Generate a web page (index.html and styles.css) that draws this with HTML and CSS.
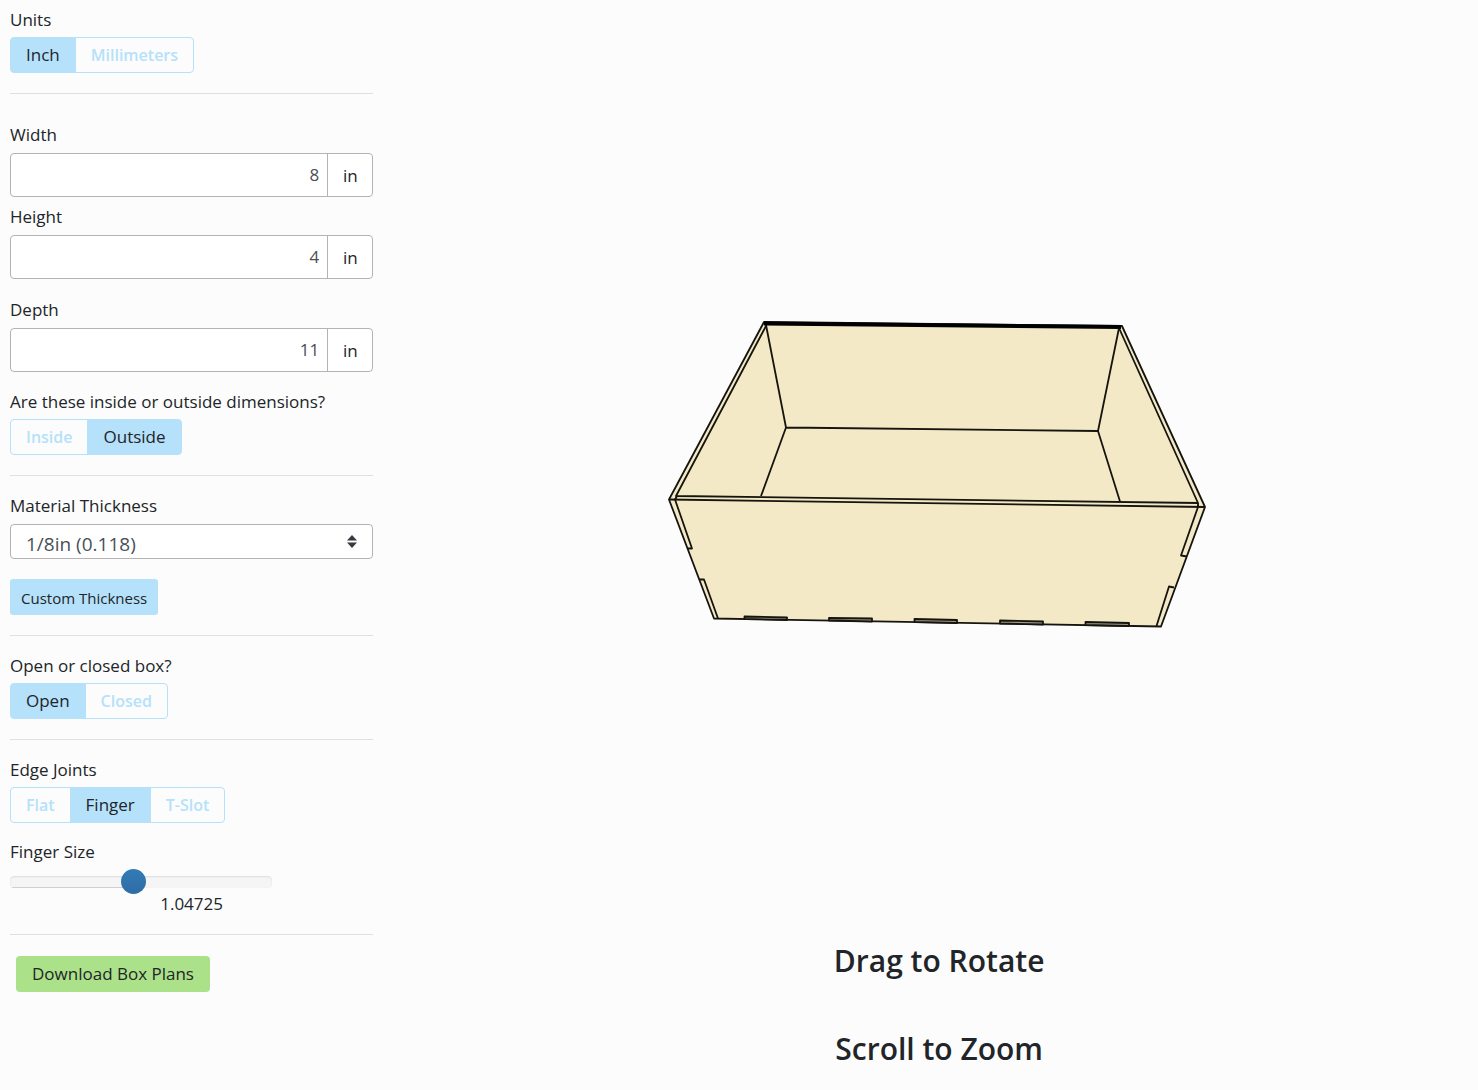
FILE: index.html
```
<!DOCTYPE html>
<html lang="en">
<head>
    <meta charset="UTF-8">
    <meta name="viewport" content="width=device-width, initial-scale=1.0">
    <title>Box Designer</title>
    <link rel="stylesheet" href="styles.css">
</head>
<body>
    <div class="page">
        <form class="sidebar">
            <div class="field" role="group" aria-labelledby="unitsLabel">
                <span class="field-label" id="unitsLabel">Units</span>
                <div class="btn-group">
                    <button type="button" class="btn-toggle active">Inch</button>
                    <button type="button" class="btn-toggle">Millimeters</button>
                </div>
            </div>

            <hr>

            <div class="dimensions">
                <label class="field-label" for="boxWidth">Width</label>
                <div class="input-group">
                    <input type="text" id="boxWidth" value="8">
                    <span class="unit">in</span>
                </div>
                <label class="field-label label-height" for="boxHeight">Height</label>
                <div class="input-group">
                    <input type="text" id="boxHeight" value="4">
                    <span class="unit">in</span>
                </div>
                <label class="field-label label-depth" for="boxDepth">Depth</label>
                <div class="input-group">
                    <input type="text" id="boxDepth" value="11">
                    <span class="unit">in</span>
                </div>
            </div>

            <div class="field field-next" role="group" aria-labelledby="sideLabel">
                <span class="field-label" id="sideLabel">Are these inside or outside dimensions?</span>
                <div class="btn-group">
                    <button type="button" class="btn-toggle">Inside</button>
                    <button type="button" class="btn-toggle active">Outside</button>
                </div>
            </div>

            <hr>

            <div class="field">
                <label class="field-label" for="thickness">Material Thickness</label>
                <div class="select-wrap">
                    <select id="thickness">
                        <option>1/8in (0.118)</option>
                        <option>1/4in (0.236)</option>
                    </select>
                    <svg class="select-arrows" viewBox="0 0 10 13" aria-hidden="true">
                        <path d="M5 0L10 5.5H0zM5 13L0 7.5H10z"/>
                    </svg>
                </div>
                <button type="button" class="btn btn-custom">Custom Thickness</button>
            </div>

            <hr>

            <div class="field" role="group" aria-labelledby="lidLabel">
                <span class="field-label" id="lidLabel">Open or closed box?</span>
                <div class="btn-group">
                    <button type="button" class="btn-toggle active">Open</button>
                    <button type="button" class="btn-toggle">Closed</button>
                </div>
            </div>

            <hr>

            <div class="field" role="group" aria-labelledby="jointLabel">
                <span class="field-label" id="jointLabel">Edge Joints</span>
                <div class="btn-group">
                    <button type="button" class="btn-toggle">Flat</button>
                    <button type="button" class="btn-toggle active">Finger</button>
                    <button type="button" class="btn-toggle">T-Slot</button>
                </div>
            </div>

            <div class="field field-next finger-size">
                <label class="field-label" for="fingerSize">Finger Size</label>
                <input type="range" id="fingerSize" min="0" max="100" value="47">
                <output for="fingerSize">1.04725</output>
            </div>

            <hr>

            <button type="button" class="btn btn-download">Download Box Plans</button>
        </form>

        <main class="preview">
            <div class="viewer">
                <svg class="box" viewBox="667 318 544 312" role="img" aria-label="Box preview">
                    <path class="wood" d="M764 322L1122 326L1205 507L1161 626.500L714 618.500L669 499.500z"/>
                    <!-- inside walls and floor -->
                    <path d="M766 325L786 427.500L1098 431L1119 328M786 427.500L761 496M1098 431L1120 501.500"/>
                    <!-- rim -->
                    <path d="M766 326L676 496L1198 503L1119 328"/>
                    <path d="M669 499.500L1205 507M675 499.500L677 496M1198 507L1198 503"/>
                    <path class="back" d="M764 323.500L1121 327"/>
                    <!-- side fingers -->
                    <path d="M675 499.500L692 548.500H688M699 579.500H704L718 618.500"/>
                    <path d="M1198 507L1181 555.500L1187 556.500M1174 587.500L1169 586.500L1156.500 626"/>
                    <!-- bottom fingers -->
                    <path class="finger" d="M744.500 619V616.500L787 617.500V620zM829 620.500V618L872 618.500V621.500zM914.500 622V619L957 620V623zM1000 623.500V620.500L1043 621.500V624.500zM1085.500 625V622L1129 623V626z"/>
                </svg>
            </div>
            <div class="hints">
                <h2>Drag to Rotate</h2>
                <h2>Scroll to Zoom</h2>
            </div>
        </main>
    </div>
</body>
</html>
```
FILE: styles.css
```
* {
    box-sizing: border-box;
}

body {
    margin: 0;
    background-color: #fcfcfc;
    color: #212529;
    font-family: 'Open Sans', 'Noto Sans', sans-serif;
    font-size: 17px;
    line-height: 26px;
}

button,
input,
select {
    font: inherit;
    color: inherit;
}

.page {
    display: flex;
    gap: 16px;
    min-height: 100vh;
}

.sidebar {
    width: 26%;
    min-width: 300px;
    padding: 7px 11px 20px 10px;
}

hr {
    margin: 20px 0 17px;
    border: 0;
    border-top: 1px solid #e0e0e0;
}

.field-label {
    display: block;
    margin-bottom: 4px;
}

.field-next {
    margin-top: 17px;
}

.btn-group {
    display: flex;
}

.btn-toggle {
    height: 36px;
    padding: 0 15px;
    border: 1px solid #b5e1fa;
    background-color: transparent;
    color: #b5e1fa;
    font-size: 16px;
    font-weight: 600;
    cursor: pointer;
}

.btn-toggle + .btn-toggle {
    margin-left: -1px;
}

.btn-toggle:first-child {
    border-radius: 4px 0 0 4px;
}

.btn-toggle:last-child {
    border-radius: 0 4px 4px 0;
}

.btn-toggle.active {
    background-color: #b5e1fa;
    color: #212529;
    font-size: 17px;
    font-weight: 400;
}

.dimensions {
    padding-top: 11px;
}

.dimensions .field-label {
    margin-bottom: 5px;
}

.dimensions .label-height {
    margin-top: 7px;
}

.dimensions .label-depth {
    margin-top: 18px;
}

.input-group {
    display: flex;
    height: 44px;
    border: 1px solid #b3b3b3;
    border-radius: 4px;
    background-color: white;
}

.input-group input {
    flex: 1;
    min-width: 0;
    padding: 0 8px;
    border: 0;
    background: none;
    color: #495057;
    text-align: right;
}

.input-group .unit {
    width: 45px;
    border-left: 1px solid #b3b3b3;
    line-height: 44px;
    text-align: center;
}

.select-wrap {
    position: relative;
    margin-top: 5px;
}

select {
    display: block;
    appearance: none;
    width: 100%;
    height: 35px;
    padding: 5px 15px 0;
    border: 1px solid #b3b3b3;
    border-radius: 4px;
    background-color: white;
    color: #495057;
    font-size: 19px;
}

.select-arrows {
    position: absolute;
    top: 11px;
    right: 16px;
    width: 10px;
    height: 13px;
    fill: #343a40;
    pointer-events: none;
}

.btn {
    height: 36px;
    border: 0;
    border-radius: 4px;
    cursor: pointer;
}

.btn-custom {
    display: block;
    margin-top: 20px;
    padding: 2px 11px 0;
    border-radius: 3px;
    background-color: #b5e1fa;
    font-size: 15px;
}

.btn-download {
    margin: 4px 6px 0;
    padding: 0 16px;
    background-color: #abe188;
}

.finger-size {
    width: 262px;
    margin-top: 16px;
}

input[type="range"] {
    display: block;
    appearance: none;
    width: 100%;
    height: 25px;
    margin: 0;
    background: none;
}

input[type="range"]::-webkit-slider-runnable-track {
    height: 12px;
    border-radius: 4px;
    background: linear-gradient(#d0d0d0, #d0d0d0) 0 100% / 47% 1px no-repeat, #f5f5f5;
    box-shadow: inset 0 1px 2px rgba(0, 0, 0, 0.1);
}

input[type="range"]::-webkit-slider-thumb {
    appearance: none;
    width: 25px;
    height: 25px;
    margin-top: -7px;
    border-radius: 50%;
    background: linear-gradient(#337ab7, #2e6da4);
}

.finger-size output {
    display: block;
    padding-right: 49px;
    line-height: 20px;
    text-align: right;
}

.preview {
    display: flex;
    flex: 1;
    flex-direction: column;
    min-width: 0;
}

.viewer {
    display: flex;
    flex: 1;
    align-items: center;
    justify-content: center;
    padding-top: 6px;
}

.box {
    width: 544px;
    max-width: 100%;
    fill: none;
    stroke: #15140f;
    stroke-width: 1.8;
    stroke-linejoin: round;
}

.box .wood {
    fill: #f3e9c6;
}

.box .back {
    stroke: #000;
    stroke-width: 4;
}

.box .finger {
    fill: #a39d84;
}

.hints {
    text-align: center;
}

.hints h2 {
    margin: 0 0 50px;
    font-size: 30px;
    font-weight: 600;
    line-height: 38px;
}

.hints h2:last-child {
    margin-bottom: 22px;
}
```
